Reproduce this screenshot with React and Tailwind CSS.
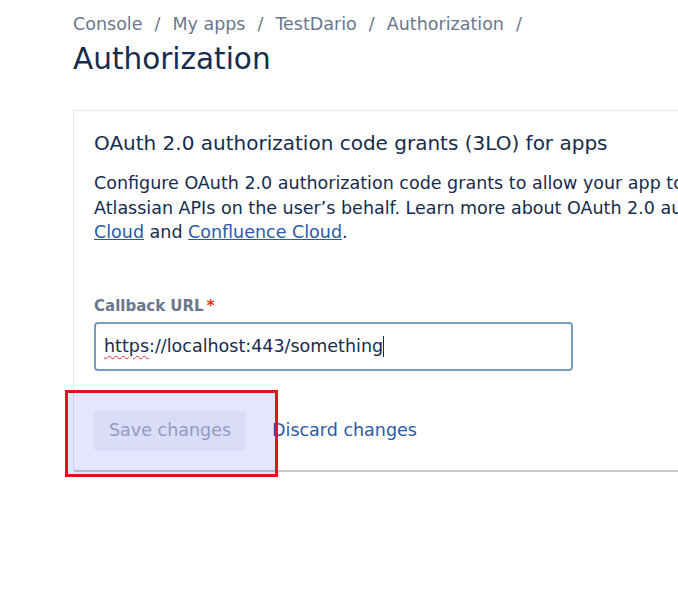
import React from 'react';

const font = { fontFamily: '"DejaVu Sans", Verdana, sans-serif' };

const App = () => {
  return (
    <div className="w-[678px] h-[594px] overflow-hidden bg-white pl-[73px] pt-[12px] text-[#172b4d]" style={font}>
      {/* Breadcrumbs */}
      <nav className="flex items-center text-[17.5px] leading-[24px] text-[#6b778c] whitespace-nowrap">
        <span>Console</span>
        <span className="px-[12px]">/</span>
        <span>My apps</span>
        <span className="px-[12px]">/</span>
        <span>TestDario</span>
        <span className="px-[12px]">/</span>
        <span>Authorization</span>
        <span className="px-[12px]">/</span>
      </nav>
      <h1 className="text-[29.5px] leading-[36px] mt-[5px] text-[#172b4d]">Authorization</h1>

      {/* Card */}
      <div className="relative mt-[33px] w-[700px] border border-[#e4e6ea] border-b-[#c8cbd1] border-b-2 rounded-[3px] pl-[20px] pt-[18px] pb-[19px]">
        <h2 className="text-[20px] leading-[28px] text-[#172b4d] whitespace-nowrap">
          OAuth 2.0 authorization code grants (3LO) for apps
        </h2>
        <p className="mt-[14px] text-[17.5px] leading-[24.5px] text-[#172b4d] whitespace-nowrap">
          Configure OAuth 2.0 authorization code grants to allow your app to access
          <br />
          Atlassian APIs on the user’s behalf. Learn more about OAuth 2.0 authorization code grants for Jira
          <br />
          <a className="text-[#2a5aa8] underline">Cloud</a> and{' '}
          <a className="text-[#2a5aa8] underline">Confluence Cloud</a>.
        </p>

        <label className="block mt-[51px] text-[15px] leading-[20px] font-bold text-[#6b778c]">
          Callback URL<span className="text-[#de350b] ml-[3px]">*</span>
        </label>
        <div className="mt-[6px] w-[479px] h-[49px] border-2 border-[#7a9cc4] rounded-[4px] flex items-center px-[8px] text-[17.5px] text-[#172b4d] whitespace-nowrap">
          <span className="underline decoration-wavy decoration-[#d33] decoration-1 underline-offset-[3px]">https</span>
          <span>://localhost:443/something</span>
          <span className="inline-block w-px h-[21px] bg-[#172b4d]"></span>
        </div>

        <div className="mt-[40px] flex items-center gap-[26px]">
          <button className="h-[40px] px-[15px] rounded-[3px] bg-[#f4f5f7] text-[17.5px] text-[#a5adba]">
            Save changes
          </button>
          <a className="text-[17.5px] text-[#2a5aa8]">Discard changes</a>
        </div>

        {/* highlight overlay */}
        <div className="absolute left-[-9px] top-[279px] w-[213px] h-[87px] border-[3px] border-[#e0141a] bg-[#0000ff]/10"></div>
      </div>
    </div>
  );
};

export default App;
